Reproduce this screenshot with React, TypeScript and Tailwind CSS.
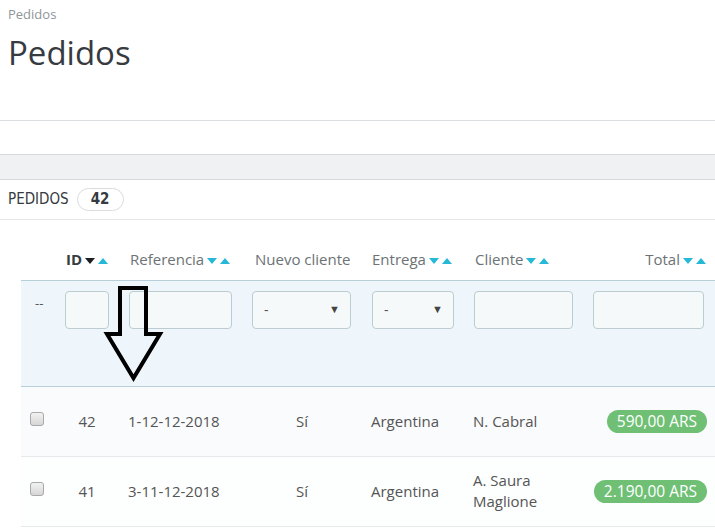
import React from "react";

const font = { fontFamily: '"Open Sans", "Liberation Sans", sans-serif' };
const condensed = { fontFamily: '"DejaVu Sans Condensed", "Liberation Sans Narrow", sans-serif' };

function SortArrows({ active = false }: { active?: boolean }) {
  return (
    <span className="ml-[3px] inline-flex items-center gap-[3px] align-middle">
      <svg width="10" height="6" viewBox="0 0 10 6">
        <path d="M0 0 L10 0 L5 6 Z" fill={active ? "#1f1f1f" : "#25b9d7"} />
      </svg>
      <svg width="10" height="6" viewBox="0 0 10 6">
        <path d="M0 6 L10 6 L5 0 Z" fill="#25b9d7" />
      </svg>
    </span>
  );
}

function FilterInput() {
  return (
    <div className="h-[38px] w-full rounded-[4px] border border-[#bbcdd2] bg-[#f6f9fa]" />
  );
}

function FilterSelect() {
  return (
    <div className="flex h-[38px] w-full items-center justify-between rounded-[4px] border border-[#bbcdd2] bg-[#f6f9fa] pl-[11px] pr-[10px] text-[14px] text-[#555]">
      <span>-</span>
      <span className="text-[11px] text-[#444]">▼</span>
    </div>
  );
}

function Checkbox() {
  return (
    <span className="inline-block h-[14px] w-[14px] rounded-[3px] border border-[#a9a9a9] bg-gradient-to-b from-[#f2f2f2] to-[#d6d6d6]" />
  );
}

function Badge({ children }: { children: React.ReactNode }) {
  return (
    <span className="inline-block rounded-full bg-[#6fbf75] px-[10px] py-[1px] text-[15.5px] leading-[21px] text-white">
      {children}
    </span>
  );
}

const rows = [
  { id: 42, ref: "1-12-12-2018", nuevo: "Sí", entrega: "Argentina", cliente: ["N. Cabral"], total: "590,00 ARS", bg: "bg-[#f9fbfc]" },
  { id: 41, ref: "3-11-12-2018", nuevo: "Sí", entrega: "Argentina", cliente: ["A. Saura", "Maglione"], total: "2.190,00 ARS", bg: "bg-[#fdfefe]" },
];

export default function App() {
  return (
    <div className="relative h-[532px] w-[715px] overflow-hidden bg-white" style={font}>
      <div className="px-[8px] pt-[4px]">
        <div className="text-[13px] leading-[20px] text-[#8f9598]">Pedidos</div>
        <h1 className="mt-[9px] text-[33px] leading-[40px] text-[#363a41]">Pedidos</h1>
      </div>
      <div className="mt-[47px] h-[34px] border-t border-[#dcdfe1]" />
      <div className="h-[26px] border-y border-[#d6d9db] bg-[#eff1f2]" />

      <div className="flex h-[40px] items-center gap-[8px] border-b border-[#e6e9eb] px-[8px]">
        <span className="text-[15px] text-[#363a41]" style={condensed}>
          PEDIDOS
        </span>
        <span
          className="flex h-[23px] w-[47px] items-center justify-center rounded-full border border-[#d8dcde] text-[15px] font-bold text-[#363a41]"
          style={condensed}
        >
          42
        </span>
      </div>

      <div className="pl-[21px]">
        <table className="w-[694px] table-fixed border-collapse text-[15px] text-[#555]">
          <colgroup>
            <col className="w-[34px]" />
            <col className="w-[64px]" />
            <col className="w-[123px]" />
            <col className="w-[120px]" />
            <col className="w-[102px]" />
            <col className="w-[119px]" />
            <col className="w-[132px]" />
          </colgroup>
          <thead>
            <tr className="h-[60px] text-[#6c7275]">
              <th className="align-bottom pb-[9px]" />
              <th className="align-bottom pb-[9px] pl-[11px] text-left font-bold text-[#363a41] whitespace-nowrap">
                ID<SortArrows active />
              </th>
              <th className="align-bottom pb-[9px] pl-[11px] text-left font-normal whitespace-nowrap">
                Referencia<SortArrows />
              </th>
              <th className="align-bottom pb-[9px] pl-[13px] text-left font-normal whitespace-nowrap">
                Nuevo cliente
              </th>
              <th className="align-bottom pb-[9px] pl-[10px] text-left font-normal whitespace-nowrap">
                Entrega<SortArrows />
              </th>
              <th className="align-bottom pb-[9px] pl-[11px] text-left font-normal whitespace-nowrap">
                Cliente<SortArrows />
              </th>
              <th className="align-bottom pb-[9px] pr-[9px] text-right font-normal whitespace-nowrap">
                Total<SortArrows />
              </th>
            </tr>
          </thead>
          <tbody>
            <tr className="h-[106px] border-y border-[#b7ced8] bg-[#eef6fb] align-top">
              <td className="pt-[13px] pl-[14px] text-[13px] text-[#555]">--</td>
              <td className="pt-[10px] pl-[10px] pr-[10px]"><FilterInput /></td>
              <td className="pt-[10px] pl-[10px] pr-[10px]"><FilterInput /></td>
              <td className="pt-[10px] pl-[10px] pr-[11px]"><FilterSelect /></td>
              <td className="pt-[10px] pl-[10px] pr-[10px]"><FilterSelect /></td>
              <td className="pt-[10px] pl-[10px] pr-[10px]"><FilterInput /></td>
              <td className="pt-[10px] pl-[10px] pr-[11px]"><FilterInput /></td>
            </tr>
            {rows.map((r) => (
              <tr key={r.id} className={`h-[70px] border-b border-[#e7eaec] ${r.bg}`}>
                <td className="pl-[9px] align-middle">
                  <div className="-mt-[4px] flex"><Checkbox /></div>
                </td>
                <td className="text-center">{r.id}</td>
                <td className="pl-[9px]">{r.ref}</td>
                <td className="text-center">{r.nuevo}</td>
                <td className="pl-[9px]">{r.entrega}</td>
                <td className="pl-[9px] leading-[21px]">
                  {r.cliente.map((c) => (
                    <div key={c}>{c}</div>
                  ))}
                </td>
                <td className="pr-[8px] text-right">
                  <Badge>{r.total}</Badge>
                </td>
              </tr>
            ))}
          </tbody>
        </table>
      </div>

      <svg
        className="pointer-events-none absolute left-0 top-0"
        width="715"
        height="532"
        viewBox="0 0 715 532"
      >
        <path
          d="M120 288 L146 288 L146 334 L160 334 L133.5 378 L107 334 L120 334 Z"
          fill="none"
          stroke="#000"
          strokeWidth="4"
          strokeLinejoin="miter"
        />
      </svg>
    </div>
  );
}
